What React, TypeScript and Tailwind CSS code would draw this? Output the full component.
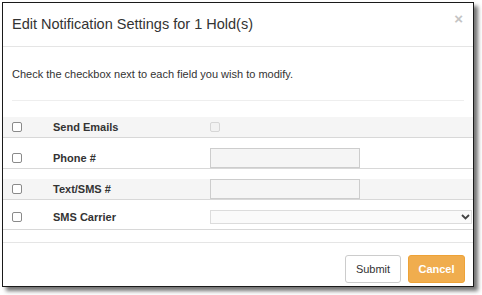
import React from 'react'

type Row = {
  label: string
  kind: 'check' | 'input' | 'select'
  striped: boolean
}

const rows: Row[] = [
  { label: 'Send Emails', kind: 'check', striped: true },
  { label: 'Phone #', kind: 'input', striped: false },
  { label: 'Text/SMS #', kind: 'input', striped: true },
  { label: 'SMS Carrier', kind: 'select', striped: false },
]

function Box({ disabled }: { disabled?: boolean }) {
  return (
    <span
      className={
        disabled
          ? 'block w-[10px] h-[10px] rounded-[2px] border border-[#d6d6d6] bg-[#f2f2f2]'
          : 'block w-[10px] h-[10px] rounded-[2px] border border-[#8a8a8a] bg-white'
      }
    />
  )
}

function Field({ kind }: { kind: Row['kind'] }) {
  if (kind === 'check') return <Box disabled />
  if (kind === 'input') {
    return <div className="w-[150px] h-[20px] border border-[#cdcdcd] bg-[#f5f5f5]" />
  }
  return (
    <div className="w-[262px] h-[14px] border border-[#dcdcdc] bg-[#fafafa] flex items-center justify-end pr-[1px]">
      <svg width="9" height="6" viewBox="0 0 9 6">
        <polyline points="1,1 4.5,4.5 8,1" fill="none" stroke="#444" strokeWidth="1.8" />
      </svg>
    </div>
  )
}

export default function App() {
  return (
    <div className="w-[482px] h-[295px] bg-white p-[2px] overflow-hidden" style={{ fontFamily: '"Liberation Sans", Arial, sans-serif' }}>
      <div className="w-[472px] h-[285px] border border-[#1a1a1a] bg-white shadow-[4px_4px_4px_rgba(0,0,0,0.55)] flex flex-col text-[#333]">
        {/* header */}
        <div className="h-[44px] shrink-0 border-b border-[#e5e5e5] flex justify-between pl-[9px] pr-[10px]">
          <div className="self-center text-[14.5px] leading-none">Edit Notification Settings for 1 Hold(s)</div>
          <span className="mt-[8px] text-[15px] font-bold leading-none text-[#c4c4c4]">×</span>
        </div>

        {/* body */}
        <div className="pt-[21px] text-[11px] leading-[13px] pl-[9px]">
          Check the checkbox next to each field you wish to modify.
        </div>
        <div className="mt-[19px] h-px bg-[#eeeeee] mx-[9px]" />

        <div className="mt-[6px]">
          {rows.map((r) => (
            <div
              key={r.label}
              className={r.kind === 'select' ? 'pt-[10px] pb-[5px] border-b border-[#d8d8d8]' : 'pt-[10px] border-b border-[#d8d8d8]'}
            >
              <div
                className={
                  (r.kind === 'select' ? 'h-[14px] ' : 'h-[20px] ') +
                  (r.striped ? 'bg-[#f5f5f5] ' : 'bg-white ') +
                  'grid grid-cols-[41px_157px_1fr] items-center pl-[9px]'
                }
              >
                <Box />
                <span className="text-[11px] font-bold leading-none">{r.label}</span>
                <Field kind={r.kind} />
              </div>
            </div>
          ))}
        </div>

        <div className="h-[12px]" />

        {/* footer */}
        <div className="border-t border-[#e5e5e5] flex-1 flex justify-end items-start gap-[7px] pt-[12px] pr-[8px]">
          <button className="w-[56px] h-[28px] border border-[#cccccc] rounded-[3px] bg-white text-[11px] text-[#333]">
            Submit
          </button>
          <button className="w-[57px] h-[28px] border border-[#eea236] rounded-[3px] bg-[#f0ad4e] text-[11px] font-bold text-white">
            Cancel
          </button>
        </div>
      </div>
    </div>
  )
}
